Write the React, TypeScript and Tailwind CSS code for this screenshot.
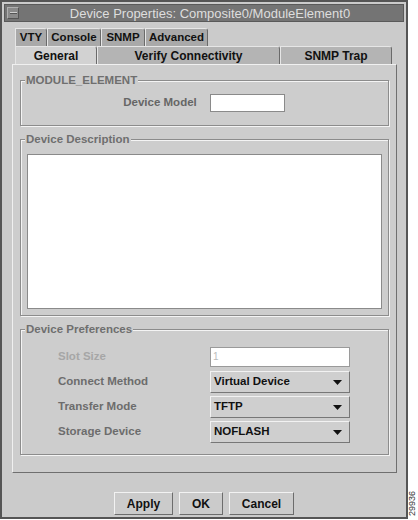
const font = { fontFamily: '"Liberation Sans", Arial, sans-serif' };

function Tab({ label, w, active, dark }: { label: string; w: string; active?: boolean; dark?: boolean }) {
  return (
    <div
      className={`${w} h-[18px] flex items-center justify-center font-bold text-[#111] border-t border-l border-t-[#e6e6e6] border-l-[#e6e6e6] border-r border-r-[#6a6a6a] rounded-tr-[3px] ${
        active ? "bg-[#d2d2d2] text-[12px]" : dark ? "bg-[#a9a9a9] text-[11.5px]" : "bg-[#b4b4b4] text-[12px]"
      }`}
    >
      {label}
    </div>
  );
}

function Select({ value }: { value: string }) {
  return (
    <div className="w-[140px] h-[22px] bg-[#cfcfcf] border border-t-[#f2f2f2] border-l-[#f2f2f2] border-r-[#777] border-b-[#777] flex items-center justify-between pl-[3px] pr-[7px] text-[11.5px] font-bold text-[#111]">
      <span>{value}</span>
      <svg width="9" height="5" viewBox="0 0 9 5">
        <path d="M0 0 H9 L4.5 5 Z" fill="#111" />
      </svg>
    </div>
  );
}

function Group({ title, children, className }: { title: string; children: React.ReactNode; className?: string }) {
  return (
    <div className={`relative border border-[#8c8c8c] shadow-[inset_1px_1px_0_#f4f4f4,1px_1px_0_#f4f4f4] ${className ?? ""}`}>
      <span className="absolute -top-[7px] left-[4px] bg-[#cdcdcd] px-[1px] text-[11.5px] font-bold text-[#6f6f6f] leading-[12px]">
        {title}
      </span>
      {children}
    </div>
  );
}

export default function App() {
  return (
    <div className="w-[418px] h-[520px] bg-white flex" style={font}>
      <div className="w-[408px] h-[519px] bg-[#cbcbcb] border-2 border-[#555] flex flex-col">
        <div className="h-[18px] mx-[2px] mt-[2px] bg-[#747474] border border-[#5a5a5a] flex items-center">
          <div className="w-[12px] h-[12px] ml-[2px] bg-[#8a8a8a] border border-t-[#b0b0b0] border-l-[#b0b0b0] border-r-[#555] border-b-[#555] flex items-center justify-center">
            <div className="w-[7px] h-[2px] bg-[#d0d0d0] border-b border-[#555]" />
          </div>
          <div className="flex-1 text-center text-[13px] text-[#dedede] leading-none pr-[2px]">
            Device Properties: Composite0/ModuleElement0
          </div>
        </div>

        <div className="flex-1 flex flex-col px-[10px] pt-[6px]">
          <div className="flex pl-[3px]">
            <Tab label="VTY" w="w-[32px]" dark />
            <Tab label="Console" w="w-[54px]" dark />
            <Tab label="SNMP" w="w-[44px]" dark />
            <Tab label="Advanced" w="w-[63px]" dark />
          </div>
          <div className="flex pl-[3px]">
            <Tab label="General" w="w-[82px]" active />
            <Tab label="Verify Connectivity" w="w-[183px]" />
            <Tab label="SNMP Trap" w="w-[112px]" />
          </div>

          <div className="w-[385px] h-[409px] bg-[#cdcdcd] border border-t-[#f0f0f0] border-l-[#f0f0f0] border-r-[#6f6f6f] border-b-[#6f6f6f] flex flex-col px-[7px] pt-[15px] gap-[13px]">
            <Group title="MODULE_ELEMENT" className="h-[46px] flex items-center justify-center">
              <div className="flex items-center gap-[13px] pr-[1px]">
                <span className="text-[11.5px] font-bold text-[#666]">Device Model</span>
                <div className="w-[75px] h-[18px] bg-white border border-[#8a8a8a]" />
              </div>
            </Group>

            <Group title="Device Description" className="h-[177px] p-[6px] pt-[14px]">
              <div className="w-full h-full bg-white border border-[#8a8a8a]" />
            </Group>

            <Group title="Device Preferences" className="h-[126px] flex flex-col pt-[16px] pl-[37px] gap-[3px]">
              {[
                ["Slot Size", null],
                ["Connect Method", "Virtual Device"],
                ["Transfer Mode", "TFTP"],
                ["Storage Device", "NOFLASH"],
              ].map(([label, value]) => (
                <div key={label} className="flex items-center h-[22px]">
                  <span className={`w-[152px] text-[11.5px] font-bold ${value ? "text-[#6c6c6c]" : "text-[#a6a6a6]"}`}>
                    {label}
                  </span>
                  {value ? (
                    <Select value={value} />
                  ) : (
                    <div className="w-[140px] h-[20px] bg-white border border-[#9a9a9a] text-[10px] text-[#bbb] pl-[2px] leading-[18px]">1</div>
                  )}
                </div>
              ))}
            </Group>
          </div>

          <div className="flex justify-center gap-[6px] pt-[19px]">
            {[
              ["Apply", "w-[59px]"],
              ["OK", "w-[44px]"],
              ["Cancel", "w-[65px]"],
            ].map(([b, w]) => (
              <div
                key={b}
                className={`${w} h-[23px] bg-[#cbcbcb] border border-t-[#f2f2f2] border-l-[#f2f2f2] border-r-[#6c6c6c] border-b-[#6c6c6c] flex items-center justify-center text-[12px] font-bold text-[#111]`}
              >
                {b}
              </div>
            ))}
          </div>
        </div>
      </div>
      <div className="flex-1 flex items-end pb-[4px]">
        <span className="text-[9px] text-[#333] [writing-mode:vertical-rl] rotate-180 leading-none">29936</span>
      </div>
    </div>
  );
}
